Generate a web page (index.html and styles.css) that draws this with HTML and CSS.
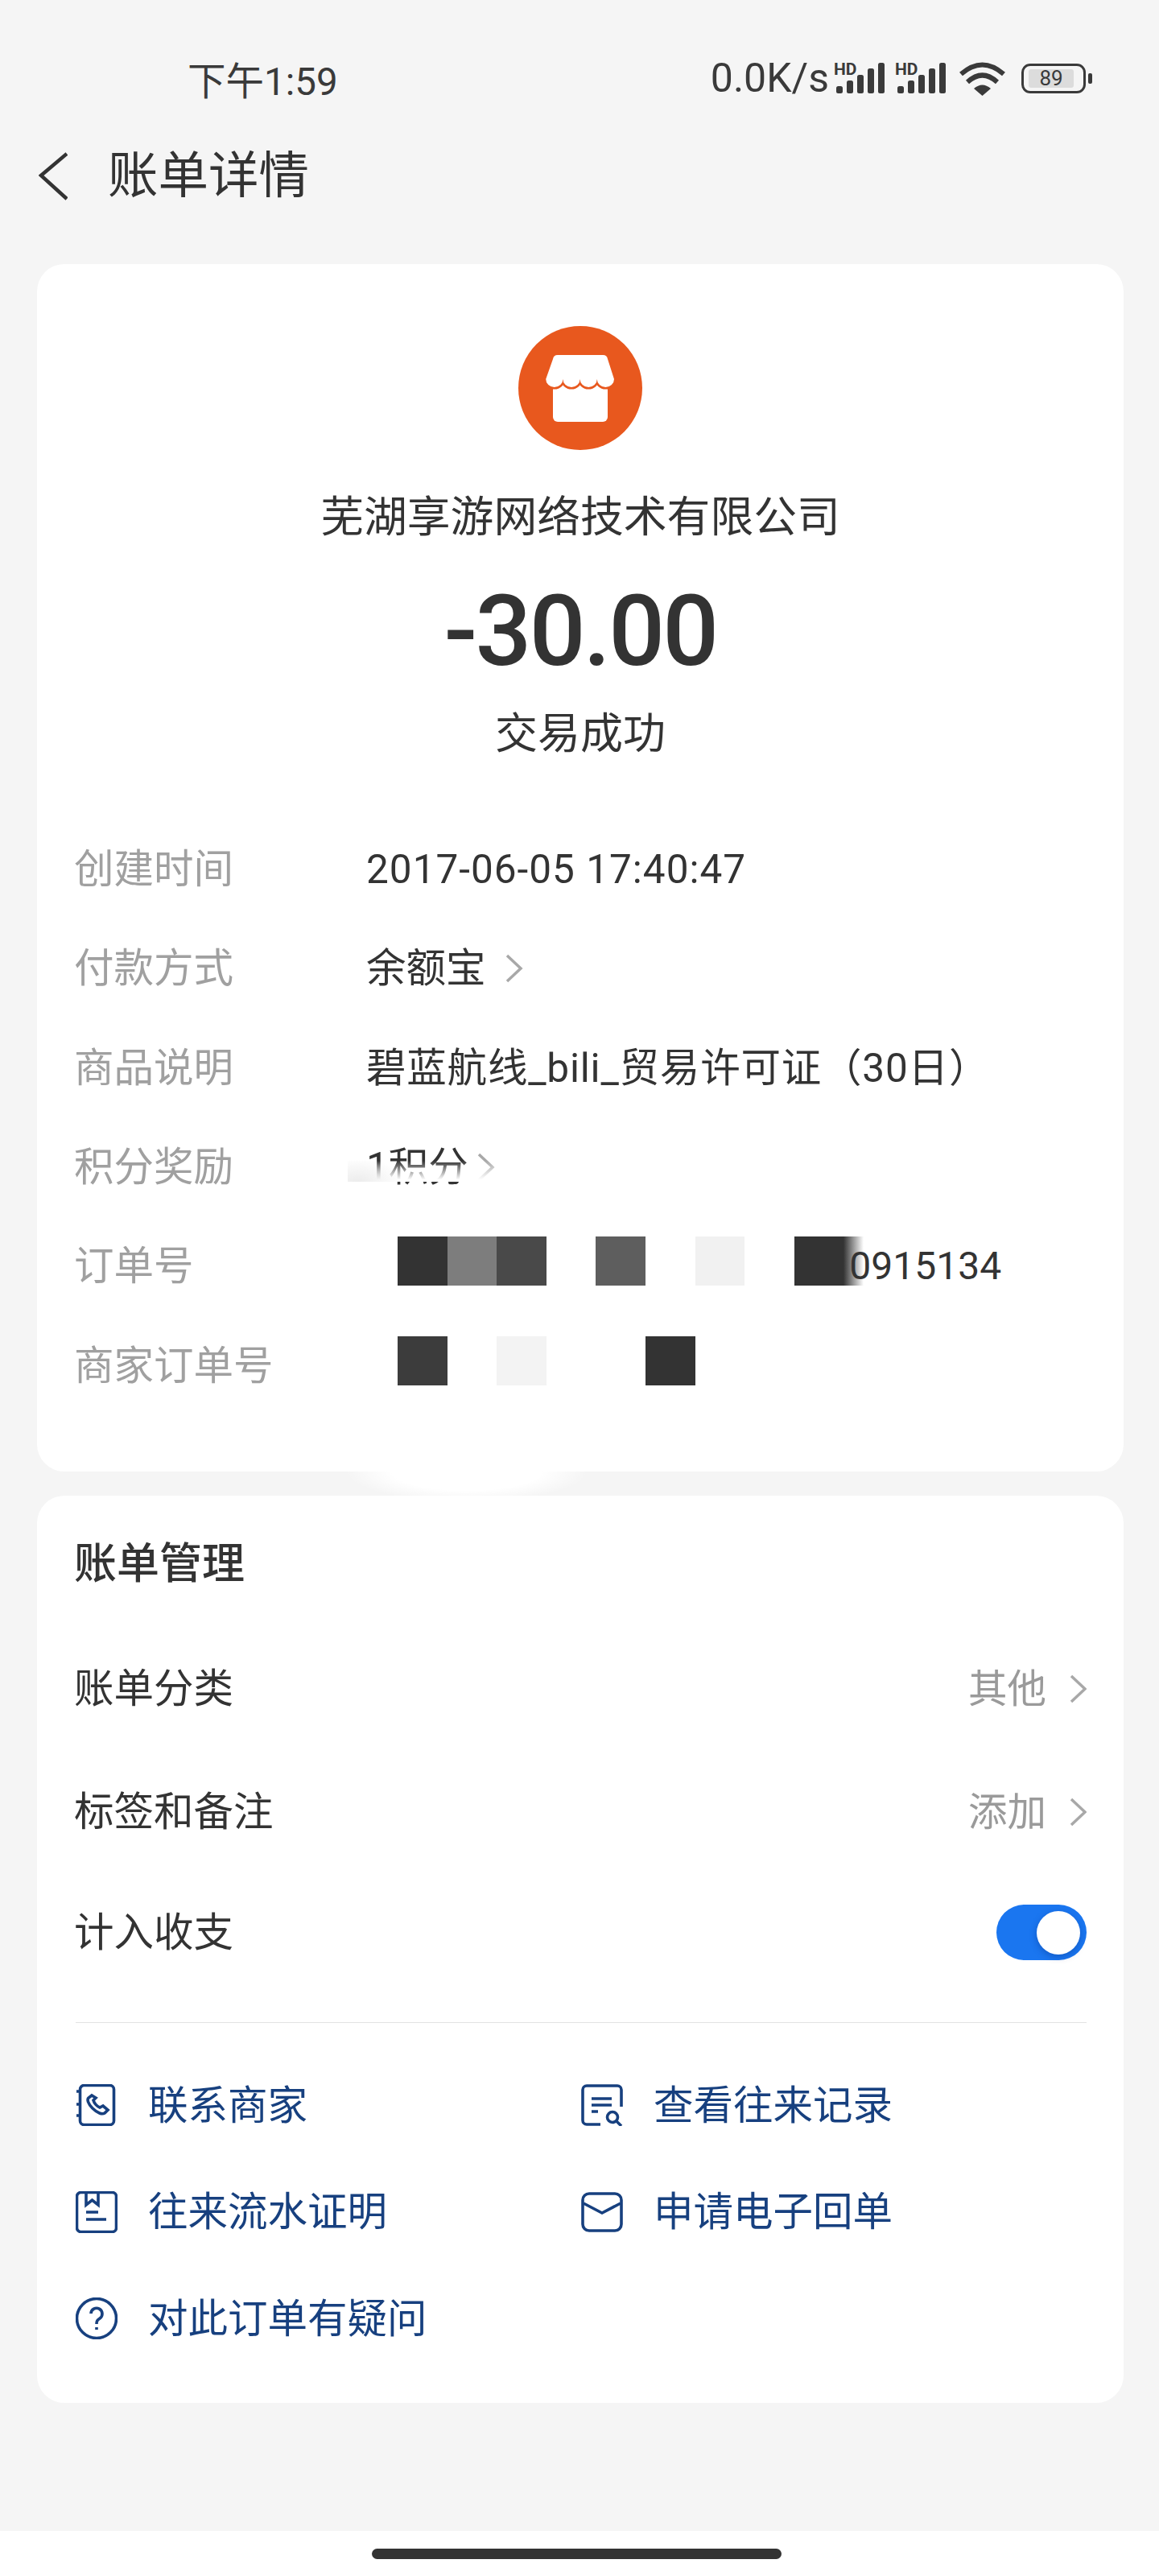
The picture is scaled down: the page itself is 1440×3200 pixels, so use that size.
FILE: index.html
```html
<!DOCTYPE html>
<html lang="zh-CN">
<head>
    <meta charset="UTF-8">
    <meta name="viewport" content="width=device-width, initial-scale=1.0">
    <title>账单详情</title>
    <link rel="stylesheet" href="styles.css">
</head>
<body>
    <!-- 状态栏 -->
    <div class="status">
        <span class="time">下午1:59</span>
        <div class="status-right">
            <span class="speed">0.0K/s</span>
            <svg class="signal" width="64" height="46" viewBox="-4 -6 64 46">
                <text x="-3" y="16" class="hd">HD</text>
                <rect x="0" y="30" width="8" height="9" rx="2.5"/>
                <rect x="13" y="23" width="8" height="16" rx="2.5"/>
                <rect x="26" y="16" width="8" height="23" rx="2.5"/>
                <rect x="39" y="8" width="8" height="31" rx="2.5"/>
                <rect x="52" y="1" width="8" height="38" rx="2.5"/>
            </svg>
            <svg class="signal signal-2" width="64" height="46" viewBox="-4 -6 64 46">
                <text x="-3" y="16" class="hd">HD</text>
                <rect x="0" y="30" width="8" height="9" rx="2.5"/>
                <rect x="13" y="23" width="8" height="16" rx="2.5"/>
                <rect x="26" y="16" width="8" height="23" rx="2.5"/>
                <rect x="39" y="8" width="8" height="31" rx="2.5"/>
                <rect x="52" y="1" width="8" height="38" rx="2.5"/>
            </svg>
            <svg class="wifi" width="59" height="44" viewBox="0 0 59 44">
                <path d="M3 17Q29.500 -6 56 17" fill="none" stroke="#3a3a3a" stroke-width="6"/>
                <path d="M11 27Q29.500 10 48 27" fill="none" stroke="#3a3a3a" stroke-width="6"/>
                <path d="M19 35Q29.500 26 40 35L29.500 44Z" fill="#3a3a3a"/>
            </svg>
            <div class="battery"><span class="battery-fill">89</span></div>
            <div class="battery-nub"></div>
        </div>
    </div>

    <!-- 标题 -->
    <div class="header">
        <svg class="back" width="36" height="60" viewBox="0 0 36 60">
            <path d="M35 2L3 29L35 58" fill="none" stroke="#333" stroke-width="4.500"/>
        </svg>
        <h1>账单详情</h1>
    </div>

    <div class="card card-top">
        <svg class="logo" width="154" height="154" viewBox="0 0 154 154">
            <circle cx="77" cy="77" r="77" fill="#e8581e"/>
            <rect x="43" y="70" width="68" height="49" rx="6" fill="#fff"/>
            <path class="awning" d="M49 36H105a6 6 0 0 1 6 5L119 66a10.600 10 0 0 1 -21.200 0a10.600 10 0 0 1 -21.200 0a10.600 10 0 0 1 -21.200 0a10.600 10 0 0 1 -21.200 0L43 41a6 6 0 0 1 6 -5Z"/>
        </svg>
        <div class="name">芜湖享游网络技术有限公司</div>
        <div class="amount">-30.00</div>
        <div class="state">交易成功</div>

        <div class="rows">
            <div class="row">
                <span class="label">创建时间</span>
                <span class="val val-plain val-date">2017-06-05 17:40:47</span>
            </div>
            <div class="row">
                <span class="label">付款方式</span>
                <span class="val">余额宝
                    <svg class="arrow" width="23" height="36" viewBox="0 0 23 36"><path d="M3 2L20 18L3 34"/></svg>
                </span>
            </div>
            <div class="row">
                <span class="label">商品说明</span>
                <span class="val val-desc">碧蓝航线_bili_贸易许可证（30日）</span>
            </div>
            <div class="row">
                <span class="label">积分奖励</span>
                <span class="val">1积分
                    <svg class="arrow arrow-tight" width="23" height="36" viewBox="0 0 23 36"><path d="M3 2L20 18L3 34"/></svg>
                    <span class="fade"></span>
                </span>
            </div>
            <div class="row">
                <span class="label">订单号</span>
                <span class="val val-plain">
                    <span class="mosaic">
                        <i class="c1"></i><i class="c2"></i><i class="c3"></i><i></i><i class="c4"></i><i></i><i class="c5"></i><i></i><i class="c1"></i><i class="c-fade"></i>
                    </span>
                    <span class="order-end">0915134</span>
                </span>
            </div>
            <div class="row">
                <span class="label">商家订单号</span>
                <span class="val val-plain">
                    <span class="mosaic">
                        <i class="c6"></i><i></i><i class="c7"></i><i></i><i></i><i class="c1"></i>
                    </span>
                </span>
            </div>
        </div>
    </div>

    <div class="card card-manage">
        <div class="blur"></div>
        <h2>账单管理</h2>
        <div class="line">
            <span class="line-text">账单分类</span>
            <span class="line-right">其他
                <svg class="arrow" width="21" height="36" viewBox="0 0 21 36"><path d="M2 2L19 18L2 34"/></svg>
            </span>
        </div>
        <div class="line">
            <span class="line-text">标签和备注</span>
            <span class="line-right">添加
                <svg class="arrow" width="21" height="36" viewBox="0 0 21 36"><path d="M2 2L19 18L2 34"/></svg>
            </span>
        </div>
        <div class="line line-switch">
            <span class="line-text">计入收支</span>
            <div class="switch"><div class="knob"></div></div>
        </div>
        <div class="divider"></div>

        <div class="links">
            <a class="link" href="#">
                <svg width="52" height="52" viewBox="0 0 52 52">
                    <rect x="5.500" y="1.500" width="42" height="49" rx="5"/>
                    <path d="M1 9H6M1 25H6M1 39H6"/>
                    <path d="M20 14L16 17C14 19 15 24 21 30C27 36 33 38 36 36L40 32L34 27L30 29C27 28 23 24 22 20L25 17Z"/>
                </svg>
                <span>联系商家</span>
            </a>
            <a class="link" href="#">
                <svg width="52" height="52" viewBox="0 0 52 52">
                    <path d="M24 50H7A5 5 0 0 1 2 45V7A5 5 0 0 1 7 2H45A5 5 0 0 1 50 7V28"/>
                    <path d="M13 18H38M13 26H38M13 34H21"/>
                    <circle cx="39" cy="41" r="6.500"/>
                    <path d="M44 46L50 52"/>
                </svg>
                <span>查看往来记录</span>
            </a>
            <a class="link" href="#">
                <svg width="52" height="52" viewBox="0 0 52 52">
                    <rect x="1.500" y="1.500" width="49" height="49" rx="5"/>
                    <path d="M13 2V17L20.500 11L28 17V2"/>
                    <path d="M13 26H28M13 35H38"/>
                </svg>
                <span>往来流水证明</span>
            </a>
            <a class="link" href="#">
                <svg width="52" height="52" viewBox="0 0 52 52">
                    <rect x="2" y="3" width="48" height="46" rx="8"/>
                    <path d="M3 15L26 27L49 15"/>
                </svg>
                <span>申请电子回单</span>
            </a>
            <a class="link" href="#">
                <svg width="52" height="52" viewBox="0 0 52 52">
                    <circle cx="26" cy="26" r="24.500"/>
                    <path d="M19 20A7 7 0 1 1 30 26C27 28 26 29 26 33"/>
                    <path d="M26 37V40"/>
                </svg>
                <span>对此订单有疑问</span>
            </a>
        </div>
    </div>

    <div class="home">
        <div class="home-bar"></div>
    </div>
</body>
</html>
```

FILE: styles.css
```css
* {
    box-sizing: border-box;
}
body {
    margin: 0;
    min-height: 3200px;
    display: flex;
    flex-direction: column;
    background-color: #f5f5f5;
    color: #333;
    font-family: Roboto, "Noto Sans CJK SC", sans-serif;
}

/* 状态栏 */
.status {
    display: flex;
    align-items: center;
    height: 148px;
    padding: 46px 83px 0 233px;
    color: #3a3a3a;
}
.time {
    font-size: 47.500px;
}
.status-right {
    display: flex;
    align-items: center;
    margin-left: auto;
}
.speed {
    font-size: 50px;
    margin-right: 5px;
}
.signal {
    margin-top: -6px;
    fill: #3a3a3a;
}
.signal-2 {
    margin-left: 12px;
}
.hd {
    font-size: 21px;
    font-weight: 700;
    font-family: Roboto, sans-serif;
}
.wifi {
    margin-left: 16px;
}
.battery {
    width: 80px;
    height: 37px;
    margin-left: 19px;
    padding: 4px 12px 4px 6px;
    border: 3.5px solid #3a3a3a;
    border-radius: 11px;
}
.battery-fill {
    display: block;
    height: 100%;
    background-color: #dcdcdc;
    border-radius: 3px;
    font-size: 26px;
    line-height: 22px;
    text-align: center;
}
.battery-nub {
    width: 5px;
    height: 13px;
    margin-left: 3px;
    background-color: #3a3a3a;
    border-radius: 2px;
}

/* 标题 */
.header {
    display: flex;
    align-items: center;
    height: 136px;
    padding-left: 48px;
}
.back {
    margin-top: 6px;
}
h1 {
    margin: 0 0 8px 50px;
    font-size: 62.500px;
    font-weight: 400;
}

/* 卡片 */
.card {
    position: relative;
    margin: 0 44px 0 46px;
    background: white;
    border-radius: 34px;
}
.card-top {
    height: 1500px;
    margin-top: 44px;
    padding: 77px 48px 0;
    text-align: center;
}
.logo {
    display: block;
    margin: 0 auto;
}
.awning {
    fill: #fff;
    stroke: #e8581e;
    stroke-width: 5;
    paint-order: stroke;
}
.name {
    margin-top: 49px;
    font-size: 53.800px;
    line-height: 70px;
}
.amount {
    margin-top: 31px;
    font-size: 123px;
    font-weight: 500;
    line-height: 150px;
    letter-spacing: -2.800px;
}
.state {
    margin-top: 18px;
    font-size: 53px;
    line-height: 70px;
}

.rows {
    margin: 71px 0 0 -2px;
    text-align: left;
}
.row {
    display: flex;
    align-items: center;
    height: 123.300px;
    font-size: 49.500px;
}
.label {
    width: 363px;
    margin-bottom: 8px;
    color: #a0a0a0;
}
.val {
    position: relative;
    display: flex;
    align-items: center;
    margin-bottom: 8px;
    color: #333;
}
.val-plain {
    margin-bottom: 0;
}
.val-date {
    letter-spacing: 1px;
}
.val-desc {
    letter-spacing: 0.800px;
}
.arrow {
    margin: 8px 0 0 23px;
}
.arrow-tight {
    margin-left: 10px;
}
.arrow path {
    fill: none;
    stroke: #a8a8a8;
    stroke-width: 3.500;
}

/* 打码 */
.mosaic {
    display: flex;
    margin: 0 0 12px 39px;
}
.mosaic i {
    display: block;
    width: 61.600px;
    height: 61px;
}
.mosaic .c1 { background-color: #333; }
.mosaic .c2 { background-color: #7d7d7d; }
.mosaic .c3 { background-color: #494949; }
.mosaic .c4 { background-color: #5e5e5e; }
.mosaic .c5 { background-color: #f1f1f1; }
.mosaic .c6 { background-color: #3c3c3c; }
.mosaic .c7 { background-color: #f3f3f3; }
.mosaic .c-fade {
    width: 25px;
    background: linear-gradient(to right, #333, #fff);
}
.order-end {
    margin-left: -18px;
    font-size: 48px;
}
.fade {
    position: absolute;
    left: 0;
    top: 32px;
    width: 190px;
    height: 26px;
    background: linear-gradient(rgba(255, 255, 255, 0), #fff 90%);
}
.fade::before {
    content: "";
    position: absolute;
    left: -23px;
    top: 0;
    width: 62px;
    height: 26px;
    background: radial-gradient(ellipse at 20% 100%, #ececec, rgba(255, 255, 255, 0) 80%);
}

/* 账单管理 */
.card-manage {
    height: 1127px;
    margin-top: 30px;
    padding: 50px 46px 36px 48px;
}
.blur {
    position: absolute;
    left: 384px;
    top: -30px;
    width: 300px;
    height: 30px;
    background: radial-gradient(ellipse 150px 38px at 50% 0, #fff 62%, rgba(255, 255, 255, 0) 100%);
}
h2 {
    margin: 0 0 43px -2px;
    font-size: 53px;
    font-weight: 500;
    line-height: 70px;
}
.line {
    display: flex;
    align-items: center;
    justify-content: space-between;
    height: 153px;
    font-size: 49.500px;
}
.line-switch {
    height: 147px;
}
.line-text {
    margin: 0 0 8px -2px;
}
.line-right {
    display: flex;
    align-items: center;
    margin-bottom: 8px;
    color: #9a9a9a;
    font-size: 48.500px;
}
.line-right .arrow {
    margin-left: 29px;
}
.switch {
    display: flex;
    justify-content: flex-end;
    width: 112px;
    height: 69px;
    padding: 8px;
    background-color: #1a76f0;
    border-radius: 35px;
}
.knob {
    width: 54px;
    height: 54px;
    background: white;
    border-radius: 50%;
    box-shadow: 0 3px 8px rgba(0, 40, 120, 0.35);
}
.divider {
    height: 1px;
    margin-top: 38px;
    background-color: #e2e2e2;
}
.links {
    display: grid;
    grid-template-columns: 628px 1fr;
    grid-auto-rows: 132.500px;
    margin-top: 36px;
}
.link {
    display: flex;
    align-items: center;
    gap: 38px;
    color: #17407f;
    font-size: 49.500px;
    text-decoration: none;
}
.link span {
    margin-bottom: 8px;
}
.link svg {
    flex: none;
    fill: none;
    stroke: #17407f;
    stroke-width: 3.600;
}

/* 底部手势条 */
.home {
    display: flex;
    justify-content: center;
    height: 56px;
    margin-top: auto;
    padding: 22px 7px 0 0;
    background: white;
}
.home-bar {
    width: 509px;
    height: 13px;
    background-color: #333;
    border-radius: 7px;
}
```
